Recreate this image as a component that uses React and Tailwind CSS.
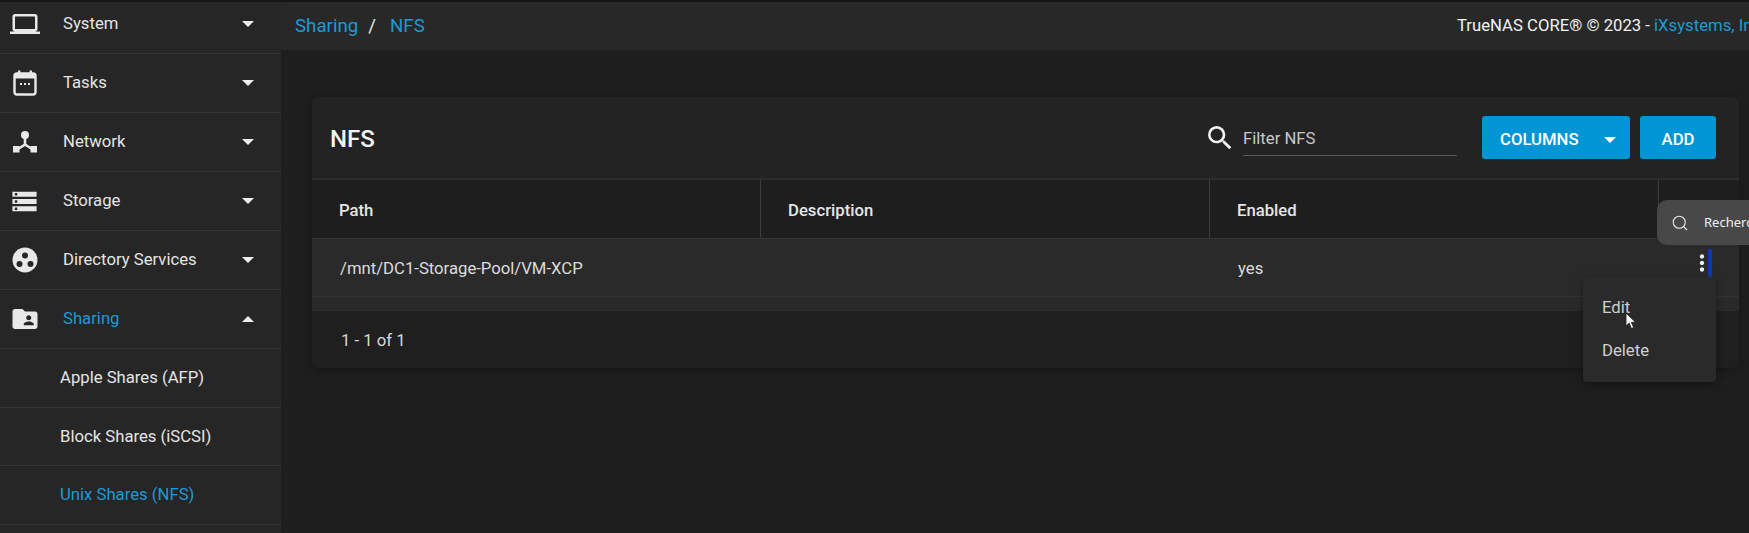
import { Search } from "lucide-react";
import { MdFolderShared, MdLaptop, MdMoreVert, MdSearch, MdStorage } from "react-icons/md";

const TasksIcon = () => (
  <svg width="24" height="26" viewBox="0 0 24 26" fill="none">
    <rect x="1.5" y="3.5" width="21" height="21" rx="2.5" stroke="#e8e8e8" strokeWidth="2.4" />
    <rect x="1.5" y="3.5" width="21" height="5" fill="#e8e8e8" />
    <rect x="5" y="0.5" width="2.4" height="4" fill="#e8e8e8" />
    <rect x="16.6" y="0.5" width="2.4" height="4" fill="#e8e8e8" />
    <rect x="7" y="13" width="2" height="2" fill="#e8e8e8" />
    <rect x="11" y="13" width="2" height="2" fill="#e8e8e8" />
    <rect x="15" y="13" width="2" height="2" fill="#e8e8e8" />
  </svg>
);

const NetworkIcon = () => (
  <svg width="24" height="22" viewBox="0 0 24 22" fill="#e8e8e8">
    <circle cx="12" cy="4" r="4" />
    <rect x="0" y="15" width="6.5" height="6.5" />
    <rect x="17.5" y="15" width="6.5" height="6.5" />
    <path d="M12 7v6.5L5 18M12 13.5l7 4.5" fill="none" stroke="#e8e8e8" strokeWidth="2.6" />
  </svg>
);

const DirectoryIcon = () => (
  <svg width="26" height="26" viewBox="0 0 26 26">
    <circle cx="13" cy="13" r="12.5" fill="#e8e8e8" />
    <circle cx="13" cy="8.5" r="3" fill="#262626" />
    <circle cx="7.5" cy="17" r="3" fill="#262626" />
    <circle cx="18.5" cy="17" r="3" fill="#262626" />
  </svg>
);

const Caret = ({ up, color = "border-t-[#eeeeee]" }) => (
  <span
    className={
      up
        ? "h-0 w-0 border-x-[6.5px] border-b-[6.5px] border-x-transparent border-b-[#eeeeee]"
        : `h-0 w-0 border-x-[6.5px] border-t-[6.5px] border-x-transparent ${color}`
    }
  />
);

const NavRow = ({ icon, label, active, up, className = "h-[59px]" }) => (
  <div className={`flex items-center border-b border-[#363636] pr-[27px] ${className}`}>
    <div className="flex w-[49px] shrink-0 justify-center">{icon}</div>
    <span className={`ml-[14px] flex-1 text-[16.7px] ${active ? "text-[#1c9ad6]" : "text-[#e4e4e4]"}`}>{label}</span>
    <Caret up={up} />
  </div>
);

const SubRow = ({ label, active }) => (
  <div className={`flex h-[58.5px] items-center border-b border-[#363636] pl-[60px] text-[16.7px] ${active ? "text-[#1c9ad6]" : "text-[#e4e4e4]"}`}>
    {label}
  </div>
);

const App = () => {
  return (
    <div className="relative flex h-[533px] w-[1749px] flex-col overflow-hidden bg-[#1e1e1e] font-['Roboto',sans-serif]">
      <div className="h-[2px] shrink-0 bg-[#151515]" />
      <div className="flex min-h-0 flex-1">
        {/* sidebar */}
        <aside className="w-[281px] shrink-0 bg-[#262626]">
          <NavRow className="h-[52px] pb-[7px]" icon={<MdLaptop size={30} color="#e8e8e8" />} label="System" />
          <NavRow icon={<TasksIcon />} label="Tasks" />
          <NavRow icon={<NetworkIcon />} label="Network" />
          <NavRow icon={<MdStorage size={29} color="#e8e8e8" />} label="Storage" />
          <NavRow icon={<DirectoryIcon />} label="Directory Services" />
          <NavRow icon={<MdFolderShared size={30} color="#e8e8e8" />} label="Sharing" active up />
          <SubRow label="Apple Shares (AFP)" />
          <SubRow label="Block Shares (iSCSI)" />
          <SubRow label="Unix Shares (NFS)" active />
        </aside>

        <main className="min-w-0 flex-1">
          <header className="flex h-[48px] items-center justify-between bg-[#282828] pl-[14px]">
            <div className="flex items-center text-[18.7px] text-[#1c9ad6]">
              <span>Sharing</span>
              <span className="ml-[10px] mr-[14px] text-[#e8e8e8]">/</span>
              <span>NFS</span>
            </div>
            <div className="w-[292px] shrink-0 overflow-hidden whitespace-nowrap text-[16.7px] text-[#f2f2f2]">
              TrueNAS CORE® © 2023 - <span className="text-[#1c9ad6]">iXsystems, Inc.</span>
            </div>
          </header>

          {/* table card */}
          <section className="ml-[31px] mt-[47px] w-[1427px] overflow-hidden rounded-[6px] shadow-[0_2px_8px_rgba(0,0,0,0.3)]">
            <div className="flex h-[83px] items-center border-b-2 border-[#2c2c2c] bg-[#232323] pl-[18px] pr-[23px]">
              <h1 className="flex-1 pt-[3px] text-2xl font-medium text-[#f4f4f4]">NFS</h1>
              <MdSearch size={32} color="#f2f2f2" />
              <div className="ml-[7px] h-[37px] w-[214px] border-b border-[#5a5a5a] pt-[9px] text-[16.7px] leading-[22px] text-[#c8c8c8]">
                Filter NFS
              </div>
              <button className="ml-[25px] flex h-[43px] w-[148px] items-center rounded-[3px] bg-[#0095d5] pl-[18px] pr-[14px] pt-[5px] text-[16.7px] font-medium text-white">
                <span className="flex-1 text-left">COLUMNS</span>
                <Caret color="border-t-white" />
              </button>
              <button className="ml-[10px] h-[43px] w-[76px] rounded-[3px] bg-[#0095d5] pt-[4px] text-[16.7px] font-medium text-white">ADD</button>
            </div>

            <div className="grid h-[58px] grid-cols-[449px_449px_449px_1fr] items-stretch bg-[#1e1e1e] text-[16.7px] font-medium text-[#e6e6e6]">
              <div className="flex items-center border-r border-[#3c3c3c] pl-[27px] pt-[4px]">Path</div>
              <div className="flex items-center border-r border-[#3c3c3c] pl-[27px] pt-[4px]">Description</div>
              <div className="flex items-center border-r border-[#3c3c3c] pl-[27px] pt-[4px]">Enabled</div>
              <div />
            </div>

            <div className="bg-[#2a2a2a] pb-[14px]">
              <div className="grid h-[59px] grid-cols-[449px_449px_449px_1fr] items-center border-y border-[#333333] text-[16.7px] text-[#dcdcdc]">
                <div className="pl-[28px] pt-[3px]">/mnt/DC1-Storage-Pool/VM-XCP</div>
                <div />
                <div className="pl-[28px] pt-[3px]">yes</div>
                <div className="flex items-center justify-end pb-[9px] pr-[27px]">
                  <MdMoreVert size={26} color="#e8eef8" className="-mr-[7px]" />
                  <span className="h-[29px] w-[4px] bg-[#0c3aa8]" />
                </div>
              </div>
            </div>

            <div className="flex h-[57px] items-center bg-[#1f1f1f] pl-[29px] pt-[2px] text-[16.7px] text-[#d8d8d8]">1 - 1 of 1</div>
          </section>
        </main>
      </div>

      {/* windows search popup */}
      <div className="absolute left-[1657px] top-[200px] flex h-[45px] w-[120px] items-center rounded-l-[10px] bg-[#484848] pl-[14px] font-['Noto_Sans',sans-serif] text-[13px] text-[#f0f0f0]">
        <Search size={18} strokeWidth={1.5} color="#e8e8e8" />
        <span className="ml-[15px]">Recherche</span>
      </div>

      {/* row actions menu */}
      <div className="absolute left-[1583px] top-[277px] flex h-[105px] w-[133px] flex-col justify-center gap-[19px] rounded-[4px] bg-[#2a2a2a] pl-[19px] text-[16.7px] leading-[24px] text-[#cfcfcf] shadow-[0_3px_8px_rgba(0,0,0,0.35)]">
        <span>Edit</span>
        <span>Delete</span>
      </div>

      {/* mouse pointer */}
      <svg className="absolute left-[1625px] top-[312px]" width="12" height="18" viewBox="0 0 12 18">
        <path d="M1 1v13l3.2-3 2.2 5.5 2.2-1-2.2-5.2H10.5z" fill="#f4f4f4" stroke="#222222" strokeWidth="0.8" />
      </svg>
    </div>
  );
};

export default App;
